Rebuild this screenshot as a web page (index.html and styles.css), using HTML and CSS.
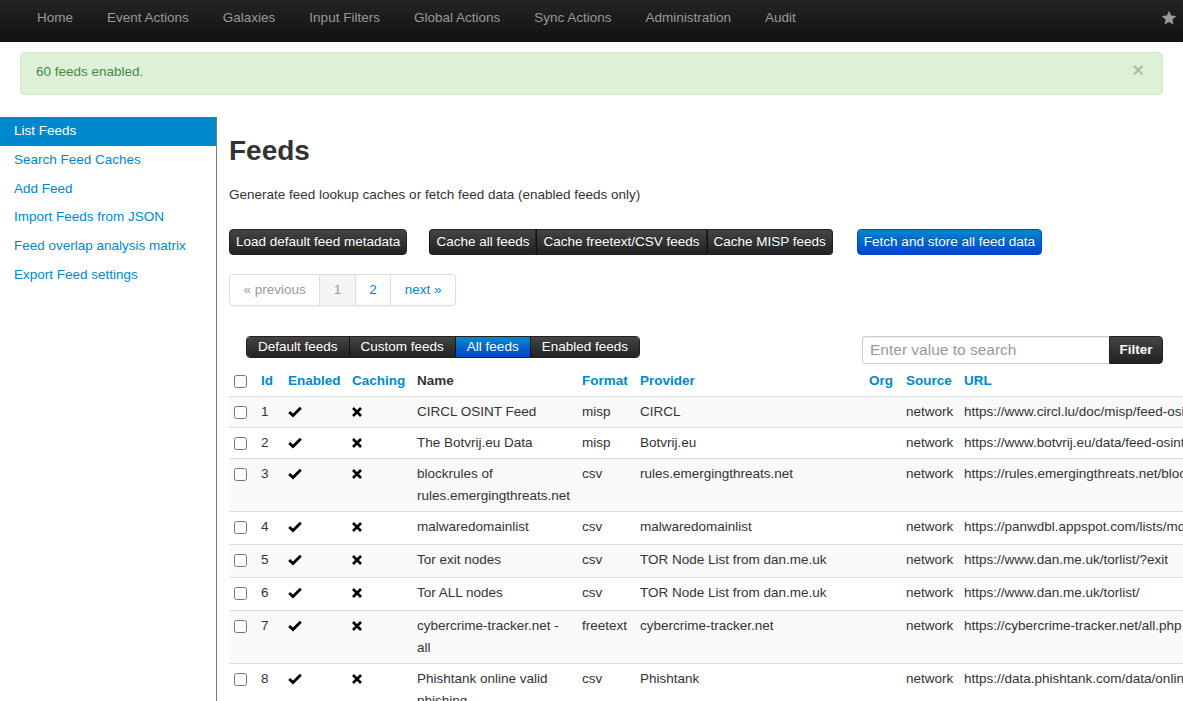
FILE: index.html
```html
<!DOCTYPE html>
<html>
<head>
<meta charset="utf-8">
<title>Feeds</title>
<link rel="stylesheet" href="styles.css">
</head>
<body>
<div class="navbar">
  <ul class="nav">
    <li><a href="#">Home</a></li>
    <li><a href="#">Event Actions</a></li>
    <li><a href="#">Galaxies</a></li>
    <li><a href="#">Input Filters</a></li>
    <li><a href="#">Global Actions</a></li>
    <li><a href="#">Sync Actions</a></li>
    <li><a href="#">Administration</a></li>
    <li><a href="#">Audit</a></li>
  </ul>
  <svg class="star" width="16" height="16" viewBox="0 0 16 16"><polygon points="8,0.8 10.1,5.6 15.3,6 11.4,9.4 12.6,14.6 8,11.9 3.4,14.6 4.6,9.4 0.7,6 5.9,5.6" fill="#999"/></svg>
</div>

<div class="alert-wrap">
  <div class="alert">60 feeds enabled.<span class="close">×</span></div>
</div>

<div class="layout">
  <ul class="side">
    <li class="active"><a href="#">List Feeds</a></li>
    <li><a href="#">Search Feed Caches</a></li>
    <li><a href="#">Add Feed</a></li>
    <li><a href="#">Import Feeds from JSON</a></li>
    <li><a href="#">Feed overlap analysis matrix</a></li>
    <li><a href="#">Export Feed settings</a></li>
  </ul>

  <div class="main">
    <h2 class="title">Feeds</h2>
    <p class="desc">Generate feed lookup caches or fetch feed data (enabled feeds only)</p>

    <div class="actions">
      <span class="btn btn-dark">Load default feed metadata</span>
      <span class="btn-group">
        <span class="btn btn-dark">Cache all feeds</span><span class="btn btn-dark">Cache freetext/CSV feeds</span><span class="btn btn-dark">Cache MISP feeds</span>
      </span>
      <span class="btn btn-blue">Fetch and store all feed data</span>
    </div>

    <ul class="pagination">
      <li class="muted">« previous</li>
      <li class="current">1</li>
      <li class="link">2</li>
      <li class="link">next »</li>
    </ul>

    <div class="toolbar">
      <div class="tabs">
        <span class="tab">Default feeds</span><span class="tab">Custom feeds</span><span class="tab tab-active">All feeds</span><span class="tab">Enabled feeds</span>
      </div>
      <div class="search">
        <input class="search-input" type="text" placeholder="Enter value to search">
        <span class="search-btn">Filter</span>
      </div>
    </div>

    <table class="feeds">
      <colgroup>
        <col class="c-cb"><col class="c-id"><col class="c-en"><col class="c-ca"><col class="c-name"><col class="c-fmt"><col class="c-prov"><col class="c-org"><col class="c-src"><col class="c-url">
      </colgroup>
      <thead>
        <tr>
          <th><input type="checkbox" class="cb"></th>
          <th class="sort">Id</th>
          <th class="sort">Enabled</th>
          <th class="sort">Caching</th>
          <th class="name">Name</th>
          <th class="sort">Format</th>
          <th class="sort">Provider</th>
          <th class="sort org">Org</th>
          <th class="sort">Source</th>
          <th class="sort">URL</th>
        </tr>
      </thead>
      <tbody>
        <tr class="odd">
          <td><input type="checkbox" class="cb"></td><td>1</td>
          <td><svg class="ic-check" width="14" height="12" viewBox="0 0 14 12"><polyline points="1.2,6 5,9.6 12.8,1.8" fill="none" stroke="#000" stroke-width="2.8"/></svg></td>
          <td><svg class="ic-x" width="10" height="10" viewBox="0 0 10 10"><path d="M1,1L9,9M9,1L1,9" stroke="#000" stroke-width="2.6"/></svg></td>
          <td class="name">CIRCL OSINT Feed</td><td>misp</td><td>CIRCL</td><td></td><td>network</td><td class="url">https://www.circl.lu/doc/misp/feed-osint</td>
        </tr>
        <tr>
          <td><input type="checkbox" class="cb"></td><td>2</td>
          <td><svg class="ic-check" width="14" height="12" viewBox="0 0 14 12"><polyline points="1.2,6 5,9.6 12.8,1.8" fill="none" stroke="#000" stroke-width="2.8"/></svg></td>
          <td><svg class="ic-x" width="10" height="10" viewBox="0 0 10 10"><path d="M1,1L9,9M9,1L1,9" stroke="#000" stroke-width="2.6"/></svg></td>
          <td class="name">The Botvrij.eu Data</td><td>misp</td><td>Botvrij.eu</td><td></td><td>network</td><td class="url">https://www.botvrij.eu/data/feed-osint</td>
        </tr>
        <tr class="odd">
          <td><input type="checkbox" class="cb"></td><td>3</td>
          <td><svg class="ic-check" width="14" height="12" viewBox="0 0 14 12"><polyline points="1.2,6 5,9.6 12.8,1.8" fill="none" stroke="#000" stroke-width="2.8"/></svg></td>
          <td><svg class="ic-x" width="10" height="10" viewBox="0 0 10 10"><path d="M1,1L9,9M9,1L1,9" stroke="#000" stroke-width="2.6"/></svg></td>
          <td class="name">blockrules of rules.emergingthreats.net</td><td>csv</td><td>rules.emergingthreats.net</td><td></td><td>network</td><td class="url">https://rules.emergingthreats.net/blockrules/compromised-ips.txt</td>
        </tr>
        <tr class="tall">
          <td><input type="checkbox" class="cb"></td><td>4</td>
          <td><svg class="ic-check" width="14" height="12" viewBox="0 0 14 12"><polyline points="1.2,6 5,9.6 12.8,1.8" fill="none" stroke="#000" stroke-width="2.8"/></svg></td>
          <td><svg class="ic-x" width="10" height="10" viewBox="0 0 10 10"><path d="M1,1L9,9M9,1L1,9" stroke="#000" stroke-width="2.6"/></svg></td>
          <td class="name">malwaredomainlist</td><td>csv</td><td>malwaredomainlist</td><td></td><td>network</td><td class="url">https://panwdbl.appspot.com/lists/mdl.txt</td>
        </tr>
        <tr class="odd tall">
          <td><input type="checkbox" class="cb"></td><td>5</td>
          <td><svg class="ic-check" width="14" height="12" viewBox="0 0 14 12"><polyline points="1.2,6 5,9.6 12.8,1.8" fill="none" stroke="#000" stroke-width="2.8"/></svg></td>
          <td><svg class="ic-x" width="10" height="10" viewBox="0 0 10 10"><path d="M1,1L9,9M9,1L1,9" stroke="#000" stroke-width="2.6"/></svg></td>
          <td class="name">Tor exit nodes</td><td>csv</td><td>TOR Node List from dan.me.uk</td><td></td><td>network</td><td class="url">https://www.dan.me.uk/torlist/?exit</td>
        </tr>
        <tr class="tall">
          <td><input type="checkbox" class="cb"></td><td>6</td>
          <td><svg class="ic-check" width="14" height="12" viewBox="0 0 14 12"><polyline points="1.2,6 5,9.6 12.8,1.8" fill="none" stroke="#000" stroke-width="2.8"/></svg></td>
          <td><svg class="ic-x" width="10" height="10" viewBox="0 0 10 10"><path d="M1,1L9,9M9,1L1,9" stroke="#000" stroke-width="2.6"/></svg></td>
          <td class="name">Tor ALL nodes</td><td>csv</td><td>TOR Node List from dan.me.uk</td><td></td><td>network</td><td class="url">https://www.dan.me.uk/torlist/</td>
        </tr>
        <tr class="odd">
          <td><input type="checkbox" class="cb"></td><td>7</td>
          <td><svg class="ic-check" width="14" height="12" viewBox="0 0 14 12"><polyline points="1.2,6 5,9.6 12.8,1.8" fill="none" stroke="#000" stroke-width="2.8"/></svg></td>
          <td><svg class="ic-x" width="10" height="10" viewBox="0 0 10 10"><path d="M1,1L9,9M9,1L1,9" stroke="#000" stroke-width="2.6"/></svg></td>
          <td class="name">cybercrime-tracker.net - all</td><td>freetext</td><td>cybercrime-tracker.net</td><td></td><td>network</td><td class="url">https://cybercrime-tracker.net/all.php</td>
        </tr>
        <tr>
          <td><input type="checkbox" class="cb"></td><td>8</td>
          <td><svg class="ic-check" width="14" height="12" viewBox="0 0 14 12"><polyline points="1.2,6 5,9.6 12.8,1.8" fill="none" stroke="#000" stroke-width="2.8"/></svg></td>
          <td><svg class="ic-x" width="10" height="10" viewBox="0 0 10 10"><path d="M1,1L9,9M9,1L1,9" stroke="#000" stroke-width="2.6"/></svg></td>
          <td class="name">Phishtank online valid phishing</td><td>csv</td><td>Phishtank</td><td></td><td>network</td><td class="url">https://data.phishtank.com/data/online-valid.csv</td>
        </tr>
      </tbody>
    </table>
  </div>
</div>
</body>
</html>
```

FILE: styles.css
```css
html, body {
  margin: 0;
  padding: 0;
}
body {
  font-family: "Liberation Sans", Arial, sans-serif;
  font-size: 13.5px;
  line-height: 20px;
  color: #333;
  background: #fff;
  overflow: hidden;
}

/* navbar */
.navbar {
  height: 42px;
  background: linear-gradient(#242424, #111);
  display: flex;
  align-items: flex-start;
  justify-content: space-between;
  padding: 0 6px 0 20px;
}
.nav {
  list-style: none;
  margin: 0;
  padding: 0;
  display: flex;
}
.nav a {
  display: block;
  padding: 8px 17px 14px;
  color: #999;
  text-decoration: none;
}
.star {
  margin-top: 10px;
}

/* alert */
.alert-wrap {
  padding: 10px 20px 0;
}
.alert {
  position: relative;
  background: #dff0d8;
  border: 1px solid #d6e9c6;
  border-radius: 4px;
  color: #468847;
  padding: 9px 35px 12px 15px;
}
.close {
  position: absolute;
  right: 18px;
  top: 7px;
  font-size: 20px;
  font-weight: bold;
  color: #000;
  opacity: 0.2;
}

/* layout */
.layout {
  display: flex;
  margin-top: 22px;
}
.side {
  list-style: none;
  margin: 0;
  padding: 0;
  width: 216px;
  flex: none;
  border-right: 1px solid #7a7a7a;
}
.side li a {
  display: block;
  padding: 4px 14px 4.8px;
  color: #0088cc;
  text-decoration: none;
}
.side li.active a {
  background: #0088cc;
  color: #fff;
}
.main {
  flex: 1;
  min-width: 0;
  padding: 0 20px 0 12px;
}
.title {
  margin: 14px 0 0;
  font-size: 28px;
  line-height: 40px;
  font-weight: bold;
}
.desc {
  margin: 14px 0 0;
}

/* buttons */
.actions {
  margin-top: 24px;
  display: flex;
  align-items: flex-start;
}
.btn {
  display: inline-block;
  padding: 2px 6px;
  line-height: 20px;
  border: 1px solid #222;
  border-radius: 4px;
  color: #fff;
  text-shadow: 0 -1px 0 rgba(0,0,0,0.25);
  white-space: nowrap;
}
.btn-dark {
  background: linear-gradient(#444, #222);
}
.btn-blue {
  background: linear-gradient(#0088cc, #0044cc);
  border-color: #0044cc;
  margin-left: 24px;
}
.btn-group {
  display: flex;
  margin-left: 22px;
}
.btn-group .btn {
  border-radius: 0;
  border-left-color: #111;
}
.btn-group .btn:first-child {
  border-radius: 4px 0 0 4px;
}
.btn-group .btn:last-child {
  border-radius: 0 4px 4px 0;
}

/* pagination */
.pagination {
  list-style: none;
  margin: 19px 0 0;
  padding: 0;
  display: inline-flex;
  border: 1px solid #ddd;
  border-radius: 4px;
  box-shadow: 0 1px 2px rgba(0,0,0,0.05);
}
.pagination li {
  padding: 5px 13.5px;
  line-height: 20px;
  border-left: 1px solid #ddd;
}
.pagination li:first-child {
  border-left: 0;
}
.pagination .muted {
  color: #999;
}
.pagination .current {
  color: #999;
  background: #f5f5f5;
}
.pagination .link {
  color: #0088cc;
}

/* toolbar */
.toolbar {
  margin-top: 30px;
  display: flex;
  justify-content: space-between;
  align-items: flex-start;
}
.tabs {
  display: flex;
  margin-left: 17px;
  border-radius: 4px;
  overflow: hidden;
  border: 1px solid #222;
}
.tab {
  padding: 0 11px;
  line-height: 20px;
  color: #fff;
  background: linear-gradient(#444, #222);
  border-left: 1px solid #111;
}
.tab:first-child {
  border-left: 0;
}
.tab-active {
  background: linear-gradient(#0088cc, #0044cc);
}
.search {
  display: flex;
}
.search-input {
  box-sizing: border-box;
  width: 247px;
  height: 28px;
  margin: 0;
  border: 1px solid #ccc;
  border-right: 0;
  border-radius: 4px 0 0 4px;
  padding: 0 7px;
  font-family: "Liberation Sans", Arial, sans-serif;
  font-size: 15.5px;
  color: #555;
  box-shadow: inset 0 1px 1px rgba(0,0,0,0.075);
}
.search-input::placeholder {
  color: #999;
}
.search-btn {
  box-sizing: border-box;
  width: 54px;
  height: 28px;
  line-height: 26px;
  text-align: center;
  color: #fff;
  font-weight: bold;
  background: linear-gradient(#444, #222);
  border: 1px solid #222;
  border-radius: 0 4px 4px 0;
}

/* table */
.feeds {
  margin-top: 2px;
  border-collapse: collapse;
  table-layout: fixed;
  width: 1230px;
}
.c-cb { width: 27px; }
.c-id { width: 27px; }
.c-en { width: 64px; }
.c-ca { width: 65px; }
.c-name { width: 165px; }
.c-fmt { width: 58px; }
.c-prov { width: 229px; }
.c-org { width: 37px; }
.c-src { width: 58px; }
.c-url { width: 500px; }
.feeds th, .feeds td {
  padding: 4px 5px;
  line-height: 22px;
  text-align: left;
  vertical-align: top;
}
.feeds td {
  border-top: 1px solid #ddd;
}
.feeds th {
  font-weight: bold;
  color: #333;
}
.feeds th.sort {
  color: #0088cc;
}
.feeds td.name, .feeds th.name {
  padding-right: 3px;
}
.feeds td.url {
  white-space: nowrap;
}
.feeds tr.odd td {
  background: #f9f9f9;
}
.feeds tr.tall td {
  padding-bottom: 6px;
}
.cb {
  margin: 5px 0 0;
  width: 13px;
  height: 13px;
  vertical-align: top;
}
.ic-check {
  margin-top: 5px;
  vertical-align: top;
}
.ic-x {
  margin-top: 6px;
  vertical-align: top;
}
```
